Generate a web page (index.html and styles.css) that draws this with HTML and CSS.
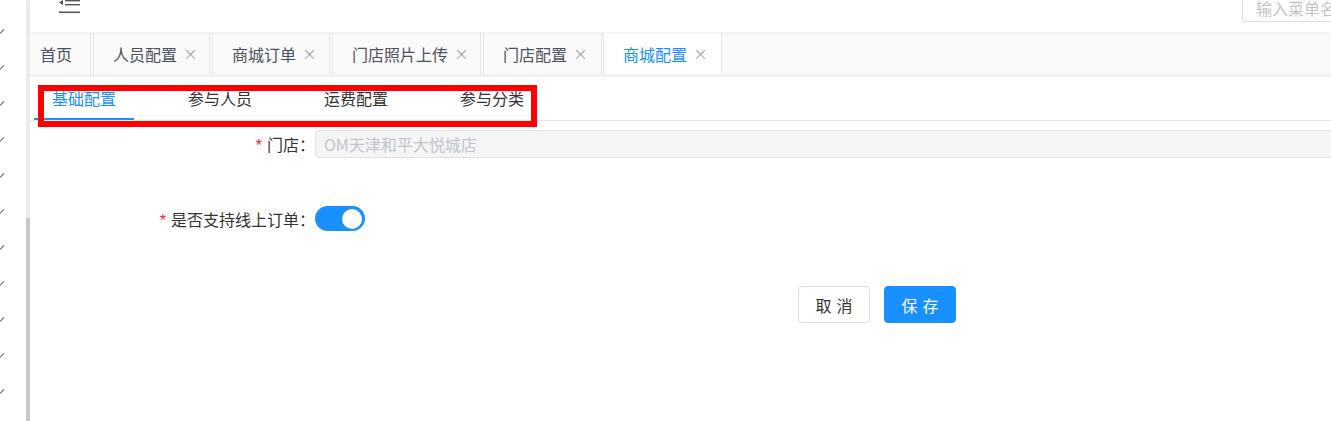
FILE: index.html
```html
<!DOCTYPE html>
<html lang="zh">
<head>
<meta charset="utf-8">
<title>商城配置</title>
<link rel="stylesheet" href="styles.css">
</head>
<body>
<div class="app">
  <aside class="sidebar">
    <div class="marks">
      <i></i><i></i><i></i><i></i><i></i><i></i><i></i><i></i><i></i><i></i><i></i>
    </div>
  </aside>
  <div class="scrollbar"><div class="thumb"></div></div>
  <main class="main">
    <header class="header">
      <svg class="fold" width="22" height="14" viewBox="0 0 22 14">
        <polygon points="0,2.5 4,0 4,5" fill="#555"/>
        <rect x="6" y="0" width="15" height="1.4" fill="#555"/>
        <rect x="6" y="4" width="15" height="1.4" fill="#555"/>
        <rect x="0" y="11.5" width="21" height="1.6" fill="#555"/>
      </svg>
      <div class="search">输入菜单名称</div>
    </header>
    <nav class="tabbar">
      <div class="tab first">首页</div>
      <div class="tab">人员配置<span class="x">×</span></div>
      <div class="tab">商城订单<span class="x">×</span></div>
      <div class="tab">门店照片上传<span class="x">×</span></div>
      <div class="tab">门店配置<span class="x">×</span></div>
      <div class="tab active">商城配置<span class="x">×</span></div>
    </nav>
    <div class="band"></div>
    <section class="content">
      <div class="subtabs">
        <div class="subtab active">基础配置</div>
        <div class="subtab">参与人员</div>
        <div class="subtab">运费配置</div>
        <div class="subtab">参与分类</div>
        <div class="highlight"></div>
      </div>
      <div class="form">
        <div class="row row-store">
          <label class="label"><span class="req">*</span>门店：</label>
          <div class="input">OM天津和平大悦城店</div>
        </div>
        <div class="row row-switch">
          <label class="label"><span class="req">*</span>是否支持线上订单：</label>
          <div class="switch"><span class="knob"></span></div>
        </div>
        <div class="actions">
          <button class="btn">取消</button>
          <button class="btn primary">保存</button>
        </div>
      </div>
    </section>
  </main>
</div>
</body>
</html>
```

FILE: styles.css
```css
* { box-sizing: border-box; }
html, body {
  margin: 0;
  padding: 0;
  background: #fff;
  font-family: "Noto Sans CJK SC", "Noto Sans", "Liberation Sans", sans-serif;
  color: #333;
  overflow: hidden;
}
.app {
  display: flex;
  width: 1331px;
  height: 421px;
  overflow: hidden;
}
.sidebar {
  width: 26px;
  flex: none;
  background: #fff;
}
.marks {
  display: flex;
  flex-direction: column;
  gap: 30px;
  padding-top: 29px;
}
.marks i {
  display: block;
  width: 6px;
  height: 6px;
}
.marks i::before {
  content: "";
  display: block;
  width: 6px;
  height: 1.3px;
  background: #666;
  transform: translate(-1px, 2px) rotate(-45deg);
}
.scrollbar {
  width: 4px;
  flex: none;
  background: #ececec;
  display: flex;
  flex-direction: column;
  justify-content: flex-end;
}
.thumb {
  height: 203px;
  background: #c8c8c8;
}
.main {
  flex: 1;
  min-width: 0;
  display: flex;
  flex-direction: column;
  box-shadow: inset 6px 0 6px -4px rgba(0,0,0,0.04);
}
.header {
  height: 32px;
  flex: none;
  display: flex;
  justify-content: space-between;
  align-items: flex-start;
  background: #fff;
  position: relative;
  z-index: 2;
  box-shadow: 0 1px 4px rgba(0,0,0,0.06);
}
.fold {
  margin-left: 29px;
}
.search {
  width: 200px;
  height: 33px;
  margin-top: -11px;
  margin-right: -111px;
  border: 1px solid #dcdfe6;
  border-radius: 4px;
  padding: 6px 13px 0;
  font-size: 16px;
  line-height: 24px;
  color: #c0c4cc;
  white-space: nowrap;
  overflow: hidden;
}
.tabbar {
  height: 42px;
  flex: none;
  display: flex;
  gap: 2px;
  background: #fafafa;
  padding-top: 1px;
}
.tab {
  display: flex;
  align-items: center;
  height: 41px;
  padding: 0 16px 0 19px;
  font-size: 16px;
  color: #4a5160;
  background: #fafafa;
  border-left: 1px solid #e6e6e6;
  border-right: 1px solid #e6e6e6;
  white-space: nowrap;
}
.tab.first {
  border-left: none;
  padding: 0 17px 0 10px;
  width: 61px;
}
.tab:nth-child(2) { width: 117px; }
.tab:nth-child(3) { width: 118px; }
.tab:nth-child(4) { width: 149px; }
.tab:nth-child(5) { width: 119px; }
.tab.active {
  width: 119px;
  background: #fff;
  color: #1890ff;
  margin-left: -1px;
}
.x {
  margin-left: 6px;
  font-size: 18px;
  color: #999;
  font-family: "DejaVu Sans", sans-serif;
  font-weight: 300;
  line-height: 1;
}
.band {
  height: 3px;
  flex: none;
  background: #f0f0f5;
}
.content {
  flex: 1;
  background: #fff;
}
.subtabs {
  position: relative;
  display: flex;
  gap: 36px;
  height: 44px;
  border-bottom: 1px solid #e4e7ed;
  padding-left: 4px;
}
.subtab {
  width: 100px;
  text-align: center;
  font-size: 16px;
  line-height: 42px;
  color: #333;
  border-bottom: 2px solid transparent;
}
.subtab.active {
  color: #1890ff;
  border-bottom-color: #1890ff;
}
.highlight {
  position: absolute;
  left: 8px;
  top: 8px;
  width: 499px;
  height: 42px;
  border: 6px solid #ff0000;
}
.form {
  padding-top: 9px;
}
.row {
  display: flex;
  align-items: center;
}
.label {
  width: 285px;
  flex: none;
  text-align: right;
  margin-right: -2px;
  font-size: 16px;
  color: #333;
  white-space: nowrap;
}
.req {
  color: #f5222d;
  margin-right: 5px;
  font-family: "Liberation Sans", sans-serif;
}
.input {
  flex: 1;
  margin-left: 2px;
  margin-right: -40px;
  height: 28px;
  border: 1px solid #e1e1e1;
  border-radius: 4px;
  background: #f5f5f5;
  color: #c0c4cc;
  font-size: 16px;
  line-height: 26px;
  padding-left: 8px;
}
.row-switch {
  margin-top: 48px;
}
.switch {
  margin-left: 2px;
  width: 50px;
  height: 25px;
  border-radius: 13px;
  background: #1890ff;
  display: flex;
  align-items: center;
  justify-content: flex-end;
  padding-right: 3px;
}
.knob {
  width: 20px;
  height: 20px;
  border-radius: 50%;
  background: #fff;
}
.actions {
  display: flex;
  gap: 14px;
  padding-left: 768px;
  margin-top: 55px;
}
.btn {
  width: 72px;
  height: 37px;
  border: 1px solid #dcdfe6;
  border-radius: 4px;
  background: #fff;
  color: #333;
  font-family: "Noto Sans CJK SC", sans-serif;
  font-size: 16px;
  letter-spacing: 5px;
  padding: 0 0 0 5px;
}
.btn.primary {
  background: #1890ff;
  border-color: #1890ff;
  color: #fff;
}
```
